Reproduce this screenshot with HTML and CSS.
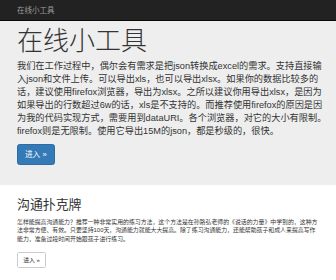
FILE: index.html
```html
<!DOCTYPE html>
<html lang="zh-CN">
<head>
    <meta charset="UTF-8">
    <meta name="viewport" content="width=device-width, initial-scale=1.0">
    <title>在线小工具</title>
    <link rel="stylesheet" href="styles.css">
</head>
<body>
    <nav class="navbar">
        <div class="container">
            <a href="#" class="brand">在线小工具</a>
        </div>
    </nav>

    <div class="jumbotron">
        <div class="container">
            <h1>在线小工具</h1>
            <p>我们在工作过程中，偶尔会有需求是把json转换成excel的需求。支持直接输入json和文件上传。可以导出xls，也可以导出xlsx。如果你的数据比较多的话，建议使用firefox浏览器，导出为xlsx。之所以建议你用导出xlsx，是因为如果导出的行数超过6w的话，xls是不支持的。而推荐使用firefox的原因是因为我的代码实现方式，需要用到dataURI。各个浏览器，对它的大小有限制。firefox则是无限制。使用它导出15M的json，都是秒级的，很快。</p>
            <a href="#" class="btn btn-primary btn-lg">进入 &raquo;</a>
        </div>
    </div>

    <div class="container">
        <div class="tool">
            <h2>沟通扑克牌</h2>
            <p>怎样能提高沟通能力？推荐一种非常实用的练习方法，这个方法是在孙路弘老师的《说话的力量》中学到的，这种方法非常方便、有效。只要坚持100天，沟通能力就能大大提高。除了练习沟通能力，还能帮助孩子和成人来提高写作能力，准备过段时间开始跟孩子进行练习。</p>
            <a href="#" class="btn btn-default">进入 &raquo;</a>
        </div>
    </div>
</body>
</html>
```

FILE: styles.css
```css
* {
    margin: 0;
    padding: 0;
    box-sizing: border-box;
}

body {
    font-family: "Liberation Sans", "Noto Sans CJK SC", sans-serif;
    font-size: 5.9px;
    line-height: 1.43;
    color: #333;
    background: #fff;
}

a {
    text-decoration: none;
}

.container {
    width: 311px;
    margin-left: 17px;
}

.navbar {
    background: #222;
    border-bottom: 1px solid #080808;
    height: 21px;
}

.brand {
    display: block;
    color: #9d9d9d;
    font-size: 7.5px;
    line-height: 21px;
}

.jumbotron {
    background: #eee;
    padding: 6px 0 20px;
    margin-bottom: 13px;
}

.jumbotron h1 {
    font-size: 26px;
    font-weight: 300;
    line-height: 1.1;
    margin-bottom: 4.3px;
}

.jumbotron p {
    font-size: 9.2px;
    line-height: 13px;
    margin-bottom: 6.5px;
}

.btn {
    display: inline-block;
    border: 1px solid transparent;
    white-space: nowrap;
}

.btn-lg {
    font-size: 7.7px;
    line-height: 1.33;
    padding: 4.3px 6.9px;
    border-radius: 2.6px;
}

.btn-primary {
    color: #fff;
    background: #337ab7;
    border-color: #2e6da4;
}

.btn-default {
    color: #333;
    background: #fff;
    border-color: #ccc;
    line-height: 1.43;
    padding: 2.6px 5.2px;
    border-radius: 1.7px;
}

.tool {
    width: 304px;
}

.tool h2 {
    font-size: 12.9px;
    font-weight: 400;
    line-height: 1.1;
    margin: 10.5px 0 5.5px;
}

.tool p {
    margin-bottom: 9px;
}
```
